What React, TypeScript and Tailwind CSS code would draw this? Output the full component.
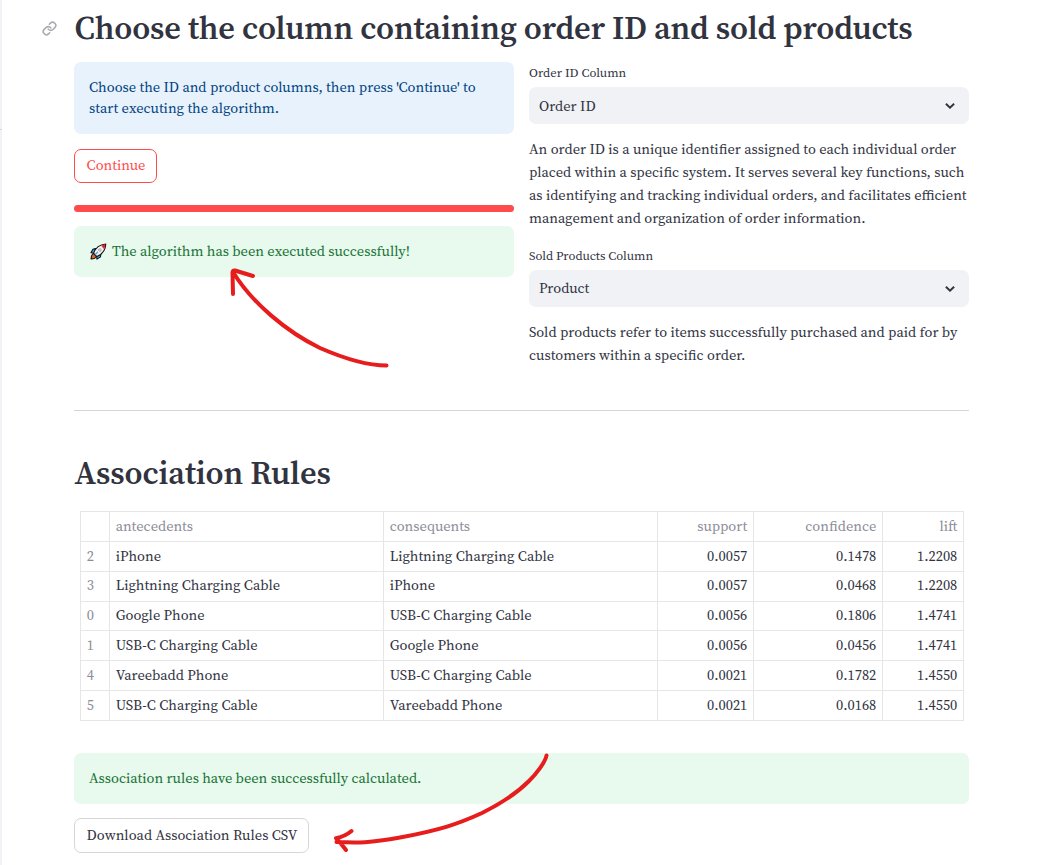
import type { ReactNode } from "react";

type Rule = [string, string, string, string, string, string];

const rules: Rule[] = [
  ["2", "iPhone", "Lightning Charging Cable", "0.0057", "0.1478", "1.2208"],
  ["3", "Lightning Charging Cable", "iPhone", "0.0057", "0.0468", "1.2208"],
  ["0", "Google Phone", "USB-C Charging Cable", "0.0056", "0.1806", "1.4741"],
  ["1", "USB-C Charging Cable", "Google Phone", "0.0056", "0.0456", "1.4741"],
  ["4", "Vareebadd Phone", "USB-C Charging Cable", "0.0021", "0.1782", "1.4550"],
  ["5", "USB-C Charging Cable", "Vareebadd Phone", "0.0021", "0.0168", "1.4550"],
];

function LinkIcon() {
  return (
    <svg className="size-[15px]" viewBox="0 0 24 24" fill="none" stroke="#a9abb3" strokeWidth="2.5" strokeLinecap="round" strokeLinejoin="round">
      <path d="M10 13a5 5 0 0 0 7.54.54l3-3a5 5 0 0 0-7.07-7.07l-1.72 1.71" />
      <path d="M14 11a5 5 0 0 0-7.54-.54l-3 3a5 5 0 0 0 7.07 7.07l1.71-1.71" />
    </svg>
  );
}

function Rocket() {
  return (
    <svg className="h-[17px] w-[18px] shrink-0" viewBox="0 0 18 18">
      <path d="M6.500 5.800 3.600 6.600 1.500 10.400l3 .4zM12.200 11.300l-.6 3.400-3.700 2.400-.4-3.200z" fill="#3aa6e8" stroke="#111" strokeWidth="1.100" strokeLinejoin="round" />
      <path d="M4.200 11C2.500 11.800 1.800 13.600 1.600 16.800c3 0 5-.9 5.700-2.700z" fill="#e8661c" stroke="#111" strokeWidth="1.100" strokeLinejoin="round" />
      <path d="M4.300 10.700C6 6 10.200 1.600 17.300 1c-.4 7-4.600 11.300-9.600 13.300z" fill="#f3f3f3" stroke="#111" strokeWidth="1.100" strokeLinejoin="round" />
      <path d="M12.200 2.700Q14.500 1.700 16.800 1.500q-.2 2.700-1.300 5z" fill="#e8222c" />
      <circle cx="11" cy="7.400" r="1.500" fill="#d2d2d2" stroke="#999" strokeWidth=".6" />
      <path d="m6 12.400 2.800-3" stroke="#3aa6e8" strokeWidth="1.500" />
    </svg>
  );
}

function Chevron() {
  return (
    <svg className="h-[6px] w-[10px]" viewBox="0 0 10 6" fill="none" stroke="#31333f" strokeWidth="1.900">
      <path d="m.9.700 4.100 4 4.100-4" />
    </svg>
  );
}

function Field({ label, value, inset }: { label: string; value: string; inset: string }) {
  return (
    <div>
      <div className="flex h-[25px] items-start text-[12.6px] leading-[22px]">{label}</div>
      <div className="flex h-[37px] items-center justify-between rounded-[7px] bg-[#f0f2f6] pr-[14px] pl-[10px]">
        <span className={inset}>{value}</span>
        <Chevron />
      </div>
    </div>
  );
}

function Alert({ tone, children }: { tone: string; children: ReactNode }) {
  return <div className={"rounded-[7px] pr-[14px] pl-[15px] " + tone}>{children}</div>;
}

export default function App() {
  return (
    <div className="relative flex h-[865px] w-[1046px] overflow-hidden bg-white font-['Source_Serif_4','Noto_Serif','Liberation_Serif',serif] text-[14.4px] text-[#31333f] [font-optical-sizing:none]">
      <aside className="flex w-[2px] shrink-0 flex-col bg-[#f0f2f6] pt-[129px]">
        <div className="h-px bg-[#d5d7dd]" />
      </aside>
      <main className="ml-[72px] w-[895px]">
        <header className="-ml-[32.500px] flex h-[62px] items-start">
          <span className="mt-[21px] flex w-[33px]"><LinkIcon /></span>
          <h1 className="mt-[8px] text-[32.4px] leading-[39px] font-semibold tracking-[-0.005em] whitespace-nowrap">Choose the column containing order ID and sold products</h1>
        </header>

        <section className="flex h-[348px] gap-[15px]">
          <div className="w-[440px]">
            <Alert tone="h-[72px] bg-[#e8f2fc] pt-[15px] leading-[21px] text-[#004280]">
              Choose the ID and product columns, then press 'Continue' to start executing the algorithm.
            </Alert>
            <button className="mt-[15px] flex h-[34px] w-[83px] items-center justify-center rounded-[7px] border border-[#ff4b4b] pl-px text-[#ff4b4b]">Continue</button>
            <div className="mt-[22px] h-[7px] rounded-full bg-[#ff4b4b]" />
            <Alert tone="mt-[14px] flex h-[51px] items-center gap-[5px] bg-[#e8f9ee] text-[#177233]">
              <Rocket />
              <span>The algorithm has been executed successfully!</span>
            </Alert>
          </div>
          <div className="w-[440px]">
            <Field label="Order ID Column" value="Order ID" inset="pt-[2px]" />
            <p className="mt-[14px] mb-[15px] h-[92px] leading-[23px]">
              An order ID is a unique identifier assigned to each individual order placed within a specific system. It serves several key functions, such as identifying and tracking individual orders, and facilitates efficient management and organization of order information.
            </p>
            <Field label="Sold Products Column" value="Product" inset="pt-0" />
            <p className="mt-[14px] leading-[23px]">Sold products refer to items successfully purchased and paid for by customers within a specific order.</p>
          </div>
        </section>

        <hr className="border-[#d6d6d9]" />

        <h1 className="mt-[42px] h-[58px] pl-[0.500px] text-[32.4px] leading-[39px] font-semibold tracking-[-0.005em]">Association Rules</h1>

        <table className="ml-[6px] w-[884px] table-fixed border-collapse [&_td]:border [&_td]:border-[#e6e6e8] [&_td]:px-[5.700px] [&_td]:pt-0 [&_th]:border [&_th]:border-[#e6e6e8] [&_th]:px-[5.700px] [&_th]:py-0">
          <colgroup>
            <col className="w-[29px]" />
            <col className="w-[274px]" />
            <col className="w-[274px]" />
            <col className="w-[96px]" />
            <col className="w-[129px]" />
            <col className="w-[81px]" />
          </colgroup>
          <thead>
            <tr className="h-[30px] text-left text-[#8b8d97] [&_th]:font-normal">
              <th />
              <th>antecedents</th>
              <th>consequents</th>
              <th className="text-right">support</th>
              <th className="text-right">confidence</th>
              <th className="text-right">lift</th>
            </tr>
          </thead>
          <tbody>
            {rules.map((r, i) => (
              <tr key={r[0]} className={i === 1 ? "h-[30px] [&_td]:pb-[2px]" : i === 2 ? "h-[29px] [&_td]:pb-0" : "h-[30px] [&_td]:pb-0"}>
                <td className="text-[#8b8d97]">{r[0]}</td>
                <td>{r[1]}</td>
                <td>{r[2]}</td>
                <td className="text-right">{r[3]}</td>
                <td className="text-right">{r[4]}</td>
                <td className="text-right">{r[5]}</td>
              </tr>
            ))}
          </tbody>
        </table>

        <Alert tone="mt-[32px] flex h-[51px] items-center bg-[#e8f9ee] text-[#177233]">
          <span>Association rules have been successfully calculated.</span>
        </Alert>
        <button className="mt-[14px] flex h-[35px] w-[235px] items-center justify-center rounded-[7px] border border-[#d6d6d9] pl-px">Download Association Rules CSV</button>
      </main>

      <svg className="pointer-events-none absolute inset-0" width="1046" height="865" fill="none" stroke="#e71d1d" strokeWidth="4" strokeLinecap="round" strokeLinejoin="round">
        <path d="M386.500 365.500C371 365.500 351 361.500 320 348C287 332 252 303 233 272M253 276 235 270.500Q232.500 270 232.500 272.500L233 294" />
        <path d="M546.500 755.500C545.500 762 536 774 529 781C519 791 500 804 482 813C458 824 440 830 400 837.500C370 843 358 843 336.500 842M351.500 831Q345 836.500 336 838.200Q339 841 346 850" />
      </svg>
    </div>
  );
}
